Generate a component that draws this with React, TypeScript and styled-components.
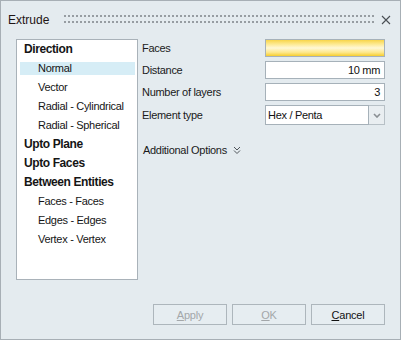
import React from "react"
import styled, { createGlobalStyle } from "styled-components"

const GlobalStyle = createGlobalStyle`
  html, body {
    margin: 0;
    padding: 0;
    background: #ffffff;
  }
  body {
    font-family: "Liberation Sans", Arial, sans-serif;
  }
`

const Window = styled.div`
  box-sizing: border-box;
  width: 401px;
  height: 340px;
  border: 1px solid #a7afb5;
  background: #e4ebef;
  display: flex;
  flex-direction: column;
  color: #1c1c1c;
`

const TitleBar = styled.div`
  height: 38px;
  display: flex;
  align-items: center;
  padding: 0 9px 0 7px;
`

const Title = styled.div`
  font-size: 12px;
  color: #1e1414;
`

const Grip = styled.div`
  flex: 1;
  align-self: flex-start;
  height: 8px;
  margin: 14px 0 0 15px;
  background-image: linear-gradient(90deg, #979da2 2px, transparent 2px),
    linear-gradient(90deg, #979da2 2px, transparent 2px);
  background-size: 4px 2px, 4px 2px;
  background-position: 0 0, 0 6px;
  background-repeat: repeat-x;
`

const CloseBtn = styled.div`
  width: 10px;
  height: 10px;
  margin-left: 7px;
  align-self: flex-start;
  margin-top: 14px;
  display: flex;
`

const Content = styled.div`
  display: flex;
  padding: 0 15px;
  height: 241px;
`

const List = styled.div`
  box-sizing: border-box;
  width: 122px;
  height: 100%;
  border: 1px solid #a9b2b9;
  background: #ffffff;
`

const Item = styled.div<{ $sub?: boolean; $selected?: boolean }>`
  height: 19px;
  line-height: 19px;
  margin: 0 2px 0 3px;
  padding-left: ${({ $sub }) => ($sub ? "18px" : "4px")};
  font-size: ${({ $sub }) => ($sub ? "11px" : "12px")};
  font-weight: ${({ $sub }) => ($sub ? "normal" : "bold")};
  letter-spacing: ${({ $sub }) => ($sub ? "-0.3px" : "-0.4px")};
  color: #151515;
  white-space: nowrap;
  background: ${({ $selected }) =>
    $selected
      ? "linear-gradient(to bottom, transparent 3px, #d6edf6 3px, #d6edf6 16px, transparent 16px)"
      : "transparent"};
`

const Panel = styled.div`
  flex: 1;
  padding-left: 4px;
  display: flex;
  flex-direction: column;
`

const Row = styled.div<{ $tall?: boolean }>`
  display: flex;
  align-items: center;
  height: ${({ $tall }) => ($tall ? "20px" : "18px")};
  margin-bottom: 4px;
`

const Label = styled.div`
  flex: 1;
  font-size: 11px;
  letter-spacing: -0.3px;
  color: #1a1a1a;
`

const Field = styled.div<{ $pick?: boolean }>`
  box-sizing: border-box;
  width: 120px;
  height: 100%;
  border: 1px solid #a6b1b9;
  background: ${({ $pick }) =>
    $pick
      ? "linear-gradient(to bottom, #f8d54a 0%, #fde98f 25%, #fff8d6 50%, #fde78a 78%, #f6cd2e 100%)"
      : "#ffffff"};
  font-size: 11px;
  letter-spacing: -0.3px;
  text-align: right;
  padding-right: 4px;
  line-height: 16px;
  color: #111;
`

const Combo = styled.div`
  width: 120px;
  height: 100%;
  display: flex;
`

const ComboText = styled.div`
  flex: 1;
  box-sizing: border-box;
  border: 1px solid #a6b1b9;
  background: #ffffff;
  font-size: 11px;
  letter-spacing: -0.3px;
  line-height: 18px;
  padding-left: 2px;
  color: #111;
`

const ComboButton = styled.div`
  box-sizing: border-box;
  width: 16px;
  border: 1px solid #b7c0c6;
  border-left: none;
  background: #e9eef1;
  display: flex;
  align-items: center;
  justify-content: center;
`

const Options = styled.div`
  margin-top: 14px;
  height: 14px;
  display: flex;
  align-items: center;
  padding-left: 1px;
  font-size: 11px;
  letter-spacing: -0.3px;
  color: #1a1a1a;
  gap: 6px;
`

const ButtonBar = styled.div`
  margin-top: 24px;
  padding-right: 15px;
  display: flex;
  justify-content: flex-end;
  gap: 5px;
`

const Button = styled.div<{ $disabled?: boolean }>`
  box-sizing: border-box;
  width: 74px;
  height: 21px;
  border: 1px solid #adb6bc;
  background: #e6edf1;
  display: flex;
  align-items: center;
  justify-content: center;
  font-size: 11px;
  letter-spacing: -0.2px;
  color: ${({ $disabled }) => ($disabled ? "#a3a7aa" : "#111")};
`

const App: React.FC = () => {
  return (
    <>
      <GlobalStyle />
      <Window>
        <TitleBar>
          <Title>Extrude</Title>
          <Grip />
          <CloseBtn>
            <svg width="10" height="10" viewBox="0 0 10 10">
              <path d="M1 1 L9 9 M9 1 L1 9" stroke="#4a4f54" strokeWidth="1.1" />
            </svg>
          </CloseBtn>
        </TitleBar>
        <Content>
          <List>
            <Item>Direction</Item>
            <Item $sub $selected>
              Normal
            </Item>
            <Item $sub>Vector</Item>
            <Item $sub>Radial - Cylindrical</Item>
            <Item $sub>Radial - Spherical</Item>
            <Item>Upto Plane</Item>
            <Item>Upto Faces</Item>
            <Item>Between Entities</Item>
            <Item $sub>Faces - Faces</Item>
            <Item $sub>Edges - Edges</Item>
            <Item $sub>Vertex - Vertex</Item>
          </List>
          <Panel>
            <Row>
              <Label>Faces</Label>
              <Field $pick />
            </Row>
            <Row>
              <Label>Distance</Label>
              <Field>10 mm</Field>
            </Row>
            <Row>
              <Label>Number of layers</Label>
              <Field>3</Field>
            </Row>
            <Row $tall>
              <Label>Element type</Label>
              <Combo>
                <ComboText>Hex / Penta</ComboText>
                <ComboButton>
                  <svg width="8" height="5" viewBox="0 0 8 5">
                    <path d="M1 1 L4 4 L7 1" stroke="#8a8f93" strokeWidth="1.6" fill="none" />
                  </svg>
                </ComboButton>
              </Combo>
            </Row>
            <Options>
              Additional Options
              <svg width="8" height="9" viewBox="0 0 8 9">
                <path
                  d="M1 1 L4 4 L7 1 M1 4.5 L4 7.5 L7 4.5"
                  stroke="#50565b"
                  strokeWidth="1"
                  fill="none"
                />
              </svg>
            </Options>
          </Panel>
        </Content>
        <ButtonBar>
          <Button $disabled>
            <span>
              <u>A</u>pply
            </span>
          </Button>
          <Button $disabled>
            <span>
              <u>O</u>K
            </span>
          </Button>
          <Button>
            <span>
              <u>C</u>ancel
            </span>
          </Button>
        </ButtonBar>
      </Window>
    </>
  )
}

export default App
